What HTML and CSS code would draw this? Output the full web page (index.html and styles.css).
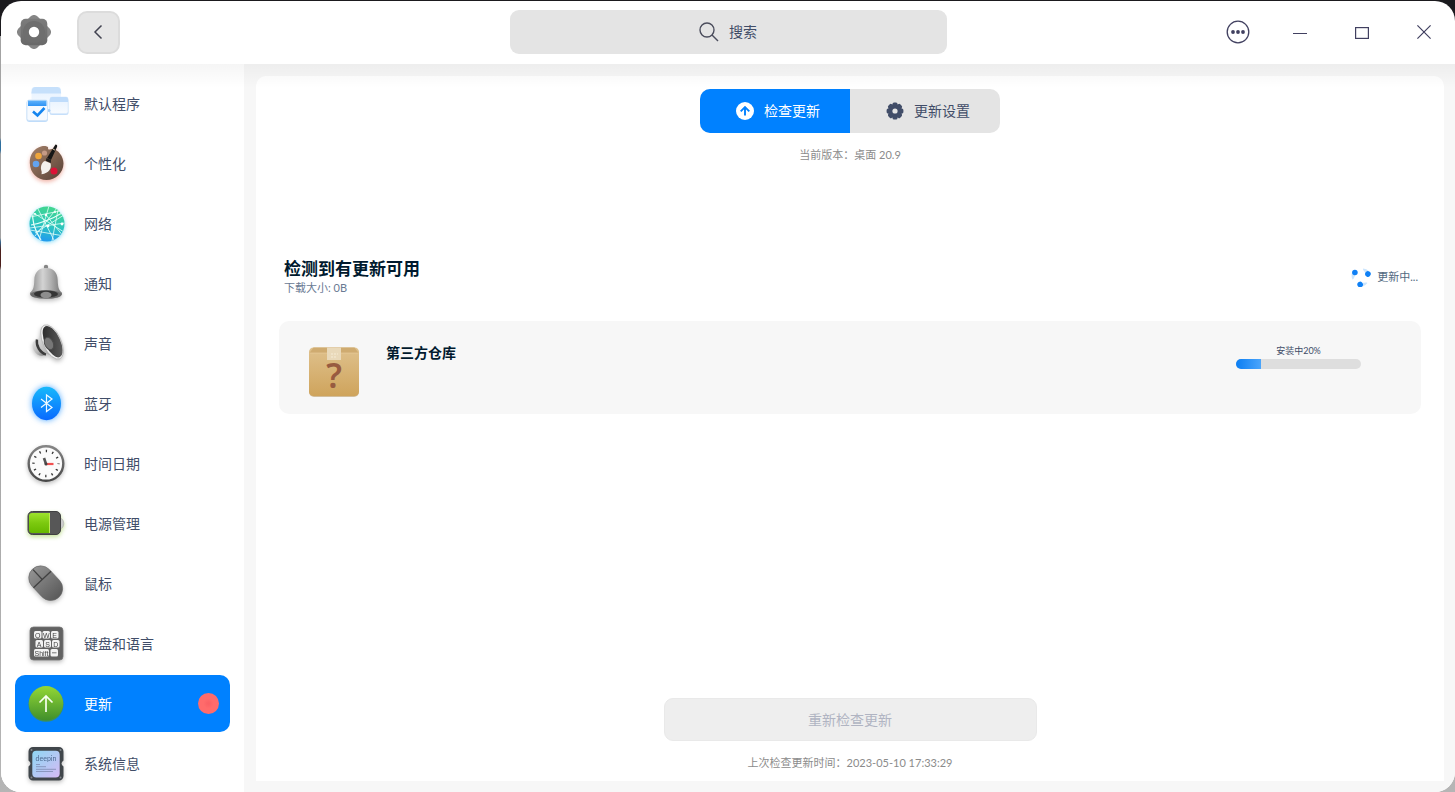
FILE: index.html
```html
<!DOCTYPE html>
<html lang="zh-CN">
<head>
<meta charset="utf-8">
<meta name="viewport" content="width=device-width, initial-scale=1">
<title>控制中心</title>
<link rel="stylesheet" href="styles.css">
</head>
<body>
<div class="window">
  <header class="titlebar">
    <div class="titlebar-start">
      <svg class="app-icon" viewBox="0 0 34 34" aria-hidden="true">
        <defs><linearGradient id="gearTop" x1="0" y1="0" x2="0" y2="1"><stop offset="0" stop-color="#7c7c7c"/><stop offset="1" stop-color="#696969"/></linearGradient></defs>
        <rect x="3.500" y="3.500" width="27" height="27" rx="5" fill="#868686" transform="rotate(45 17 17)"/>
        <rect x="3.700" y="3.700" width="26.600" height="26.600" rx="5" fill="url(#gearTop)"/>
        <circle cx="17" cy="17" r="11" fill="#6e6e6e"/>
        <circle cx="17" cy="17" r="5.200" fill="#fff"/>
      </svg>
      <button class="back" type="button" aria-label="返回">
        <svg width="16" height="16" viewBox="0 0 16 16" fill="none" stroke="#414250" stroke-width="1.500"><path d="M10.500 1.500 4 8l6.500 6.500"/></svg>
      </button>
    </div>
    <label class="search">
      <svg width="20" height="20" viewBox="0 0 20 20" fill="none" stroke="#4b4d5c" stroke-width="1.400"><circle cx="8" cy="8" r="7"/><path d="m13 13 6 6"/></svg>
      <input type="text" placeholder="搜索" aria-label="搜索">
    </label>
    <div class="controls">
      <button type="button" aria-label="菜单"><svg width="24" height="24" viewBox="0 0 24 24"><circle cx="12" cy="12" r="10.800" fill="none" stroke="#414060" stroke-width="1.300"/><g fill="#414060"><circle cx="7" cy="12" r="1.900"/><circle cx="12" cy="12" r="1.900"/><circle cx="17" cy="12" r="1.900"/></g></svg></button>
      <button type="button" aria-label="最小化"><svg width="14" height="14" viewBox="0 0 14 14"><path d="M0 8.500h14" stroke="#414060" stroke-width="1.200"/></svg></button>
      <button type="button" aria-label="最大化"><svg width="14" height="14" viewBox="0 0 14 14"><rect x=".6" y="2.600" width="12.800" height="10.800" fill="none" stroke="#414060" stroke-width="1.200"/></svg></button>
      <button type="button" aria-label="关闭"><svg width="14" height="14" viewBox="0 0 14 14"><path d="m.4.4 13.200 13.200m0-13.200L.4 13.600" stroke="#414060" stroke-width="1.200"/></svg></button>
    </div>
  </header>

  <div class="body">
    <nav class="sidebar" aria-label="设置模块">
      <a class="item" href="#default">
        <svg class="icon" viewBox="0 0 44 45" aria-hidden="true">
          <defs><linearGradient id="fadeWin" x1="0" y1="0" x2="0" y2="1"><stop offset="0" stop-color="#e6f2ff"/><stop offset="1" stop-color="#f8fbff"/></linearGradient>
          <linearGradient id="blueBar" x1="0" y1="0" x2="0" y2="1"><stop offset="0" stop-color="#5fb2fb"/><stop offset="1" stop-color="#2f93f4"/></linearGradient></defs>
          <rect x="7.500" y="6" width="29.500" height="24" rx="3" fill="url(#fadeWin)"/>
          <path d="M11 6h22.500q2.500 0 3 2.500l.7 4H7.300l.7-4Q8.500 6 11 6z" fill="#c6e0fb"/>
          <rect x="25.500" y="17" width="19" height="17" rx="2.500" fill="#c6dffa"/>
          <rect x="26" y="16" width="18" height="16.500" rx="2" fill="url(#fadeWin)" stroke="#d8e9fb" stroke-width=".6"/>
          <path d="M28 16h14a2 2 0 0 1 2 2v3H26v-3a2 2 0 0 1 2-2z" fill="#bfdcfb"/>
          <circle cx="25" cy="29.500" r="1.500" fill="#a9d0f8"/>
          <rect x="2.500" y="19.500" width="21.500" height="21.500" rx="3" fill="#bfdcfa"/>
          <rect x="3" y="19" width="20.500" height="20.500" rx="2" fill="#f6faff" stroke="#cfe3f8" stroke-width=".8"/>
          <path d="M4 19.500h18.500V25H4z" fill="url(#blueBar)"/>
          <path d="m9 30.500 4.500 4 7-7.500" fill="none" stroke="#1585ef" stroke-width="2.600"/>
        </svg>
        <span>默认程序</span>
      </a>
      <a class="item" href="#personal">
        <svg class="icon glow-red" viewBox="0 0 44 45" aria-hidden="true">
          <defs><linearGradient id="wood" x1="0" y1="0" x2="1" y2="1"><stop offset="0" stop-color="#a3816b"/><stop offset=".5" stop-color="#80624f"/><stop offset="1" stop-color="#553f36"/></linearGradient></defs>
          <path d="M24 8c1-3-3-3.500-7-2.500C10 7.500 5.500 14 5.800 22 6 32 13.500 39 22.500 39S39.500 31.500 39.500 22.500C39.500 15 34 8.500 28.500 8c-2-.2-3 1.500-4.500 0z" fill="url(#wood)"/>
          <circle cx="14.500" cy="15" r="3.300" fill="#eea53b"/><circle cx="20.500" cy="12" r="2.600" fill="#c59a85"/><circle cx="12" cy="23" r="3.300" fill="#63a4ef"/><circle cx="30" cy="30" r="3.500" fill="#dc1236"/>
          <path d="M31.500 3.500c1.500 0 2 1 1.500 2.500l-6 13-4-2 7.500-12z" fill="#161616"/><path d="m29 8 2 1.200" stroke="#d8c8a0"/>
          <path d="m22.500 17 4.500 2-.2 3-5-2.300z" fill="#24211f"/>
          <path d="m21 20 5.500 2.300c1.500 5-1.500 10-9 11 1-4-1.500-4-.2-9 .7-2.300 2-3.800 3.700-4.300z" fill="#f4f1ed"/>
        </svg>
        <span>个性化</span>
      </a>
      <a class="item" href="#network">
        <svg class="icon glow-cyan" viewBox="0 0 44 45" aria-hidden="true">
          <defs><linearGradient id="net" x1=".6" y1="0" x2=".4" y2="1"><stop offset="0" stop-color="#42d78d"/><stop offset=".55" stop-color="#2cc5c0"/><stop offset="1" stop-color="#2099f0"/></linearGradient><clipPath id="netClip"><circle cx="23" cy="23" r="17.500"/></clipPath></defs>
          <circle cx="23" cy="23" r="17.500" fill="url(#net)"/>
          <g clip-path="url(#netClip)" fill="none" stroke="#e6fff8" stroke-width=".8"><path d="M6 16 36 10M6 27l35-5M8 11l32 20M11 35 33 7M14 8l17 33M25 5 15 39M22 14l18 22M6 29l34 6M34 9 28 40M11 32l29-18"/><path d="M9 10q-2 14 8 29M38 12q-15 9-31 12" stroke-width="1.200"/></g>
          <g fill="#fff"><circle cx="22" cy="14" r="1.300"/><circle cx="24" cy="25" r="1.400"/><circle cx="38" cy="23" r="1.400"/><circle cx="11" cy="13" r="1"/><circle cx="31" cy="11" r="1"/></g>
        </svg>
        <span>网络</span>
      </a>
      <a class="item" href="#notice">
        <svg class="icon shadow" viewBox="0 0 44 45" aria-hidden="true">
          <defs><linearGradient id="bell" x1="0" y1="0" x2="1" y2="0"><stop offset="0" stop-color="#858585"/><stop offset=".4" stop-color="#d3d3d3"/><stop offset=".65" stop-color="#b0b0b0"/><stop offset="1" stop-color="#727272"/></linearGradient></defs>
          <circle cx="22" cy="6" r="2.200" fill="#858585"/>
          <path d="M22 7c7.500 0 11.500 4.500 11.700 12 .2 7 1 10 4 12.500 2 3-4 6.500-15.700 6.500S4.300 34.500 6.300 31.500c3-2.500 3.800-5.500 4-12.500C10.500 11.500 14.500 7 22 7z" fill="url(#bell)"/>
          <ellipse cx="22" cy="33.500" rx="15.500" ry="4.300" fill="#696969"/>
          <ellipse cx="22" cy="33" rx="12" ry="3.600" fill="#343434"/>
          <ellipse cx="22" cy="34" rx="5.500" ry="3.300" fill="#8d8d8d"/>
        </svg>
        <span>通知</span>
      </a>
      <a class="item" href="#sound">
        <svg class="icon shadow" viewBox="0 0 44 45" aria-hidden="true">
          <defs><linearGradient id="horn" x1="0" y1="0" x2="1" y2="1"><stop offset="0" stop-color="#e8e8e8"/><stop offset=".6" stop-color="#b5b5b5"/><stop offset="1" stop-color="#777"/></linearGradient><linearGradient id="hornIn" x1="0" y1="0" x2="1" y2="1"><stop offset="0" stop-color="#242424"/><stop offset="1" stop-color="#646464"/></linearGradient></defs>
          <path d="M12 19c-4 1-4.500 6-2 10.500S17 36 21 34l-4-15z" fill="url(#horn)"/>
          <path d="M13 18.500c-1 7 3 13 9 15" stroke="#3c3c3c" stroke-width="2.500" fill="none"/>
          <path d="M17 5c-1 5-1 9-2.500 13-.5 7 3 12 8.500 15 4 1 8 3 12 5z" fill="url(#horn)"/>
          <ellipse cx="28" cy="21" rx="9" ry="18.500" transform="rotate(-25 28 21)" fill="#f0f0f0" stroke="#aaa" stroke-width=".7"/>
          <ellipse cx="28.600" cy="20.700" rx="7.600" ry="17" transform="rotate(-25 28.600 20.700)" fill="url(#hornIn)"/>
          <ellipse cx="25" cy="22.500" rx="4.300" ry="6.500" transform="rotate(-25 25 22.500)" fill="#777" stroke="#4c4c4c"/>
        </svg>
        <span>声音</span>
      </a>
      <a class="item" href="#bluetooth">
        <svg class="icon glow-blue" viewBox="0 0 44 45" aria-hidden="true">
          <defs><linearGradient id="bt" x1="0" y1="0" x2="0" y2="1"><stop offset="0" stop-color="#18b9fb"/><stop offset="1" stop-color="#0869ff"/></linearGradient></defs>
          <ellipse cx="22.500" cy="22.500" rx="14.500" ry="16.700" fill="url(#bt)"/>
          <path d="m17 18 11 8.500-5.500 4V14l5.500 4-11 8.500" fill="none" stroke="#f1faff" stroke-width="1.200"/>
        </svg>
        <span>蓝牙</span>
      </a>
      <a class="item" href="#datetime">
        <svg class="icon shadow" viewBox="0 0 44 45" aria-hidden="true">
          <defs><linearGradient id="rim" x1="0" y1="0" x2="0" y2="1"><stop offset="0" stop-color="#858585"/><stop offset="1" stop-color="#484848"/></linearGradient></defs>
          <circle cx="22" cy="22.500" r="17.300" fill="#fbfbfb" stroke="url(#rim)" stroke-width="2.400"/>
          <circle cx="22" cy="22.500" r="12.500" fill="none" stroke="#333" stroke-width="2.400" stroke-dasharray="1.300 5.245" stroke-dashoffset=".6"/>
          <path d="m20 17 2 6" stroke="#555" stroke-width="2.600"/><path d="M22 23h7.500" stroke="#f25050" stroke-width="2.200"/><circle cx="22" cy="23" r="1.500" fill="#444"/>
        </svg>
        <span>时间日期</span>
      </a>
      <a class="item" href="#power">
        <svg class="icon glow-green" viewBox="0 0 44 45" aria-hidden="true">
          <defs><linearGradient id="charge" x1="0" y1="0" x2="0" y2="1"><stop offset="0" stop-color="#9de22c"/><stop offset=".5" stop-color="#7cc90f"/><stop offset="1" stop-color="#66b800"/></linearGradient></defs>
          <path d="M36 17c5 1 5 10 0 11z" fill="#ccc" stroke="#aaa" stroke-width=".6"/>
          <rect x="4" y="10.500" width="32.500" height="23" rx="4.500" fill="#575757" stroke="#414141"/>
          <path d="M8 12h18v20H8a3 3 0 0 1-3-3V15a3 3 0 0 1 3-3z" fill="url(#charge)"/><path d="M25.500 12v20" stroke="#bbea54"/>
        </svg>
        <span>电源管理</span>
      </a>
      <a class="item" href="#mouse">
        <svg class="icon shadow" viewBox="0 0 44 45" aria-hidden="true">
          <defs><linearGradient id="mouseBody" x1="0" y1="0" x2="0" y2="1"><stop offset="0" stop-color="#929292"/><stop offset="1" stop-color="#5a5a5a"/></linearGradient></defs>
          <g transform="rotate(-43 22 22.500)"><rect x="10" y="2.800" width="24" height="38.500" rx="12" fill="url(#mouseBody)" stroke="#666" stroke-width=".6"/><path d="M10 17h24M22 17V3.500" stroke="#414141" stroke-width="1.300" fill="none"/></g>
        </svg>
        <span>鼠标</span>
      </a>
      <a class="item" href="#keyboard">
        <svg class="icon shadow" viewBox="0 0 44 45" aria-hidden="true">
          <rect x="6" y="6" width="33" height="33" rx="3.500" fill="#626262" stroke="#777" stroke-width=".8"/>
          <g fill="#f2f2f2"><rect x="10" y="10" width="7.500" height="7.500" rx="1.500"/><rect x="18.500" y="10" width="7.500" height="7.500" rx="1.500"/><rect x="27" y="10" width="7.500" height="7.500" rx="1.500"/><rect x="11.500" y="19" width="7.500" height="7.500" rx="1.500"/><rect x="20" y="19" width="7" height="7.500" rx="1.500"/><rect x="28" y="19" width="7.500" height="7.500" rx="1.500"/><rect x="10" y="28" width="15" height="7.500" rx="1.500"/><rect x="26.500" y="28" width="7.500" height="7.500" rx="1.500"/></g>
          <g class="keys" text-anchor="middle"><text x="13.700" y="16.500">Q</text><text x="22.200" y="16.500">W</text><text x="30.700" y="16.500">E</text><text x="15.200" y="25.500">A</text><text x="23.500" y="25.500">S</text><text x="31.700" y="25.500">D</text><text x="17.500" y="34.500">Shift</text></g>
          <path d="M28 31.800h4.500" stroke="#777"/>
        </svg>
        <span>键盘和语言</span>
      </a>
      <a class="item active" href="#update" aria-current="page">
        <svg class="icon" viewBox="0 0 44 45" aria-hidden="true">
          <defs><linearGradient id="upd" x1="0" y1="0" x2="0" y2="1"><stop offset="0" stop-color="#93d736"/><stop offset="1" stop-color="#408f2b"/></linearGradient></defs>
          <circle cx="22" cy="23.300" r="17.500" fill="#3b8f61"/><circle cx="22" cy="22.300" r="17.200" fill="url(#upd)"/>
          <path d="M22 31V15m-6.500 6.500L22 15l6.500 6.500" fill="none" stroke="#f6fff0" stroke-width="1.700"/>
        </svg>
        <span>更新</span>
        <i class="badge"></i>
      </a>
      <a class="item" href="#system">
        <svg class="icon shadow" viewBox="0 0 44 45" aria-hidden="true">
          <defs><linearGradient id="chip" x1="0" y1="0" x2="1" y2="1"><stop offset="0" stop-color="#8fd7f3"/><stop offset=".5" stop-color="#b1c9f4"/><stop offset="1" stop-color="#d6baf5"/></linearGradient></defs>
          <path d="M9 6h26a4.500 4.500 0 0 1 4.500 4.500v9q-4 3 0 6V35A4.500 4.500 0 0 1 35 39.500H9A4.500 4.500 0 0 1 4.500 35v-9.500q4-3 0-6v-9A4.500 4.500 0 0 1 9 6z" fill="#40464b"/>
          <rect x="8.300" y="9.700" width="27.400" height="26.800" rx="4" fill="url(#chip)"/>
          <g fill="#83888c"><circle cx="7.500" cy="9" r="1"/><circle cx="36.500" cy="9" r="1"/><circle cx="7.500" cy="36.500" r="1"/><circle cx="36.500" cy="36.500" r="1"/></g>
          <text class="chip-text" x="22" y="19.500" text-anchor="middle">deepin</text>
          <path d="M12 23.500h4M12 25.700h10M12 28.300h20M12 30.500h17" stroke="#7583a8" stroke-width=".7"/>
        </svg>
        <span>系统信息</span>
      </a>
    </nav>

    <main class="panel">
      <div class="tabs">
        <button class="tab selected" type="button"><svg width="18" height="18" viewBox="0 0 18 18"><circle cx="9" cy="9" r="9" fill="#fff"/><path d="M9 13.500V5.500M4.700 9.300 9 5l4.300 4.300" fill="none" stroke="#0081ff" stroke-width="1.900"/></svg>检查更新</button>
        <button class="tab" type="button"><svg width="18" height="18" viewBox="0 0 18 18"><g fill="#414d68"><circle cx="9" cy="9" r="7"/><g id="teeth"><rect x="6.500" y=".6" width="5" height="16.800" rx="1.500"/><rect x="6.500" y=".6" width="5" height="16.800" rx="1.500" transform="rotate(90 9 9)"/></g><use href="#teeth" transform="rotate(45 9 9)"/></g><circle cx="9" cy="9" r="2.600" fill="#e4e4e4"/></svg>更新设置</button>
      </div>
      <p class="note version">当前版本：桌面 20.9</p>

      <section class="summary">
        <div>
          <h1>检测到有更新可用</h1>
          <p class="size">下载大小: 0B</p>
        </div>
        <div class="status" role="status">
          <svg width="20" height="20" viewBox="0 0 20 20" aria-hidden="true">
            <g id="spin"><path d="M1 6a9 9 0 0 0 .5 6.500C3.500 12 3 9 6 6z" fill="#b5dafc" opacity=".7"/><circle cx="3.900" cy="5.500" r="2.800" fill="#0f80f5"/></g>
            <use href="#spin" transform="rotate(120 10 10)"/><use href="#spin" transform="rotate(240 10 10)"/>
          </svg>
          更新中...
        </div>
      </section>

      <article class="card">
        <svg class="box" width="50" height="50" viewBox="0 0 50 50" aria-hidden="true">
          <defs><linearGradient id="carton" x1="0" y1="0" x2="0" y2="1"><stop offset="0" stop-color="#dfc18d"/><stop offset="1" stop-color="#cfa45c"/></linearGradient></defs>
          <rect y="2" width="50" height="48" rx="5" fill="#b99761" opacity=".6"/>
          <rect width="50" height="48.500" y=".5" rx="4.500" fill="url(#carton)"/>
          <path d="M4.500.5h41L49.500 6H.5z" fill="#cfab70"/><path d="M.5 6h49" stroke="#e6ca98" stroke-width=".7"/>
          <path d="M18 .5h14v12.500H18z" fill="#e9d9ba"/><path d="M22 7h7M22 10h6" stroke="#f6ecd6" stroke-dasharray="2 1"/>
          <text class="question" x="25" y="41" text-anchor="middle">?</text>
        </svg>
        <h2>第三方仓库</h2>
        <div class="install">
          <label for="install">安装中20%</label>
          <progress id="install" value="20" max="100"></progress>
        </div>
      </article>

      <div class="footer">
        <button class="recheck" type="button" disabled>重新检查更新</button>
        <p class="note">上次检查更新时间：2023-05-10 17:33:29</p>
      </div>
    </main>
  </div>
</div>
</body>
</html>
```
FILE: styles.css
```css
* { box-sizing: border-box; }
body {
  margin: 0;
  height: 100vh;
  padding: 1px 0 0 1px;
  overflow: hidden;
  background: linear-gradient(#1b1a1e 36px, #a3a3a3 36px, #a3a3a3 138px, #2f6f9f 142px, #2f6f9f 150px, #a3a3a3 154px, #a3a3a3 238px, #35658c 242px, #4b1f1c 250px, #4b1f1c 266px, #a3a3a3 270px, #b5b5b5);
  color: #414d68;
  font-family: Lato, "Noto Sans CJK SC", sans-serif;
  font-size: 14px;
  line-height: 20px;
}
h1, h2, p { margin: 0; }
button, input { font: inherit; color: inherit; border: 0; padding: 0; background: none; }
svg { display: block; flex: none; }

.window {
  height: 100%;
  display: flex;
  flex-direction: column;
  border-radius: 20px;
  overflow: hidden;
  background: #fff;
}
.titlebar {
  flex: none;
  height: 63px;
  display: grid;
  grid-template-columns: 1fr minmax(200px, 437px) 1fr;
  align-items: center;
  padding-bottom: 1px;
}
.titlebar-start { display: flex; align-items: center; gap: 26px; padding-left: 16px; }
.app-icon { width: 34px; height: 34px; }
.back {
  width: 43px;
  height: 43px;
  display: grid;
  place-items: center;
  border: 2px solid #dcdcdc;
  border-radius: 10px;
  background: #e6e6e6;
}
.search {
  height: 44px;
  display: flex;
  align-items: center;
  justify-content: center;
  gap: 10px;
  border-radius: 9px;
  background: #e4e4e4;
}
.search input { width: 28px; outline: 0; }
.search input:focus { width: 240px; }
.search input::placeholder { color: #414d68; opacity: 1; }
.controls { display: flex; justify-content: flex-end; }
.controls button { width: 62px; height: 44px; display: grid; place-items: center; }

.body {
  flex: 1;
  min-height: 0;
  display: flex;
  position: relative;
  background: #f7f7f7;
}
.body::before {
  content: "";
  position: absolute;
  z-index: 1;
  inset: 0 0 auto;
  height: 24px;
  background: linear-gradient(rgba(0, 0, 0, .04), transparent);
  pointer-events: none;
}
.sidebar {
  flex: none;
  width: 243px;
  display: flex;
  flex-direction: column;
  gap: 3px;
  padding: 11px 14px 0;
  overflow: hidden;
  background: #fff;
}
.item {
  flex: none;
  height: 57px;
  display: flex;
  align-items: center;
  gap: 16px;
  padding: 0 11px 0 9px;
  border-radius: 10px;
  color: inherit;
  text-decoration: none;
}
.item.active { background: #0081ff; color: #fff; }
.icon { width: 44px; height: 45px; overflow: visible; }
.shadow { filter: drop-shadow(0 2px 2px rgba(0, 0, 0, .25)); }
.glow-red { filter: drop-shadow(0 2px 2px rgba(220, 70, 40, .4)); }
.glow-cyan { filter: drop-shadow(0 1px 2px rgba(30, 190, 240, .5)); }
.glow-blue { filter: drop-shadow(0 0 3px rgba(0, 130, 255, .7)); }
.glow-green { filter: drop-shadow(0 2px 2px rgba(110, 180, 0, .4)); }
.keys { font: 7px "Liberation Sans", sans-serif; fill: #444; }
.chip-text { font: 7px Lato, sans-serif; fill: #4e6b91; }
.badge {
  width: 21px;
  height: 21px;
  margin-left: auto;
  border-radius: 50%;
  background: radial-gradient(#fa6265 1px, #ff6b6b 5px);
}

.panel {
  flex: 1;
  min-width: 0;
  display: flex;
  flex-direction: column;
  margin: 12px 11px 11px 12px;
  padding: 13px 23px 8px;
  border-radius: 10px 10px 0 0;
  background: #fff;
}
.tabs {
  align-self: center;
  display: flex;
  border-radius: 10px;
  overflow: hidden;
  background: #e4e4e4;
}
.tab {
  width: 150px;
  height: 44px;
  display: flex;
  align-items: center;
  justify-content: center;
  gap: 10px;
  padding-left: 6px;
}
.tab.selected { background: #0081ff; color: #fff; }
.note { color: #8b8b8b; font-size: 11px; text-align: center; }
.version { margin-top: 12px; }
.summary {
  display: flex;
  align-items: center;
  justify-content: space-between;
  margin-top: 93px;
  padding: 0 3px 0 5px;
}
h1 { color: #001a2e; font-size: 17px; line-height: 22px; }
.size { color: #6a7a93; font-size: 11px; line-height: 16px; }
.status { display: flex; align-items: center; gap: 6px; color: #526a7f; font-size: 11px; }
.card {
  display: flex;
  align-items: flex-start;
  margin-top: 25px;
  padding: 22px 60px 17px 30px;
  border-radius: 10px;
  background: #f7f7f7;
}
.box { margin-top: 4px; }
.question { font: 600 34px "Noto Sans", sans-serif; fill: #985b40; }
h2 { margin-left: 27px; color: #001a2e; font-size: 14px; line-height: 20px; }
.install { width: 125px; margin-left: auto; }
.install label { display: block; font-size: 9px; line-height: 16px; text-align: center; }
.install progress {
  display: block;
  width: 100%;
  height: 10px;
  border: 0;
  border-radius: 5px;
  overflow: hidden;
  appearance: none;
  background: #dedede;
}
.install progress::-webkit-progress-bar { background: #dedede; }
.install progress::-webkit-progress-value { background: linear-gradient(90deg, #0b7ef3, #4ba5fb); }
.footer {
  margin-top: auto;
  display: flex;
  flex-direction: column;
  align-items: center;
  gap: 12px;
}
.recheck {
  width: 373px;
  max-width: 100%;
  height: 43px;
  border: 1px solid #e9e9e9;
  border-radius: 9px;
  background: #eee;
  color: #b0b4c2;
}
```
